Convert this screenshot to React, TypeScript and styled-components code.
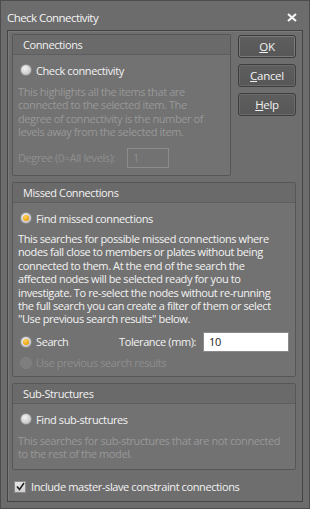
import React from "react";
import styled, { createGlobalStyle } from "styled-components";

const Global = createGlobalStyle`
  html, body { margin: 0; padding: 0; background: #6b6b6b; }
  body { font-family: "Open Sans", "Noto Sans", "DejaVu Sans", sans-serif; }
`;

const Window = styled.div`
  width: 310px;
  height: 509px;
  box-sizing: border-box;
  background: #6c6c6c;
  border: 1px solid #4c4c4c;
  display: flex;
  flex-direction: column;
  font-size: 11px;
  letter-spacing: -0.4px;
  color: #f2f2f2;
`;

const TitleBar = styled.div`
  height: 29px;
  display: flex;
  align-items: center;
  justify-content: space-between;
  padding: 0 12px 0 6px;
`;

const Title = styled.span`
  font-size: 11.5px;
  letter-spacing: -0.55px;
  color: #f4f4f4;
  padding-top: 4px;
`;

const Close = styled.svg`
  width: 10px;
  height: 9px;
  margin-top: 3px;
`;

const Body = styled.div`
  margin: 0 6px 6px;
  flex: 1;
  border: 1px solid #444;
  box-shadow: inset 1px 1px 0 #7a7a7a;
  background: #6e6e6e;
  padding: 3px 6px 0 4px;
  display: grid;
  grid-template-columns: 219px 58px;
  column-gap: 7px;
  row-gap: 6px;
  align-content: start;
`;

const Group = styled.div<{ $span?: boolean; $h: number }>`
  grid-column: ${(p) => (p.$span ? "1 / span 2" : "auto")};
  height: ${(p) => p.$h}px;
  box-sizing: border-box;
  border: 1px solid #565656;
  border-radius: 2px;
  background: #727272;
  display: flex;
  flex-direction: column;
`;

const GroupHeader = styled.div`
  height: 19px;
  flex: none;
  background: #6a6a6a;
  border-bottom: 1px solid #5e5e5e;
  display: flex;
  align-items: center;
  padding-left: 10px;
  color: #f2f2f2;
`;

const GroupContent = styled.div`
  padding: 6px 5px 0 4px;
  display: flex;
  flex-direction: column;
`;

const RadioRow = styled.label<{ $disabled?: boolean; $w?: number }>`
  display: flex;
  align-items: center;
  height: 18px;
  gap: 4px;
  padding-left: 3px;
  box-sizing: border-box;
  flex: none;
  width: ${(p) => (p.$w ? `${p.$w}px` : "auto")};
  white-space: nowrap;
  color: ${(p) => (p.$disabled ? "#8e8e8e" : "#f2f2f2")};
`;

const RadioCircle = styled.span<{ $checked?: boolean; $disabled?: boolean }>`
  width: 12px;
  height: 12px;
  flex: none;
  border-radius: 50%;
  box-sizing: border-box;
  border: 1px solid ${(p) => (p.$disabled ? "#828282" : "#8a8a8a")};
  background: ${(p) =>
    p.$disabled
      ? "#7e7e7e"
      : "radial-gradient(circle at 40% 35%, #f4f4f4, #c8c8c8 70%, #b0b0b0)"};
  display: flex;
  align-items: center;
  justify-content: center;
  &::after {
    content: "";
    display: ${(p) => (p.$checked ? "block" : "none")};
    width: 6px;
    height: 6px;
    border-radius: 50%;
    background: radial-gradient(circle at 40% 35%, #ffd266, #f0a000 70%, #c87800);
  }
`;

const Desc = styled.p<{ $disabled?: boolean }>`
  margin: 0;
  padding-left: 1px;
  line-height: 13.4px;
  white-space: nowrap;
  color: ${(p) => (p.$disabled ? "#989898" : "#f2f2f2")};
`;

const DegreeRow = styled.div`
  display: flex;
  align-items: center;
  gap: 12px;
  margin-top: 9px;
  color: #8f8f8f;
  padding-left: 1px;
`;

const TextBox = styled.div<{ $w: number; $disabled?: boolean }>`
  width: ${(p) => p.$w}px;
  height: 20px;
  flex: none;
  box-sizing: border-box;
  border: 1px solid ${(p) => (p.$disabled ? "#8c8c8c" : "#8a8a8a")};
  background: ${(p) => (p.$disabled ? "transparent" : "#ffffff")};
  color: ${(p) => (p.$disabled ? "#8f8f8f" : "#1a1a1a")};
  display: flex;
  align-items: center;
  padding-left: 5px;
`;

const SearchRow = styled.div`
  display: flex;
  align-items: center;
  margin-top: 6px;
`;

const Tolerance = styled.span`
  margin-right: 7px;
  white-space: nowrap;
`;

const Buttons = styled.div`
  display: flex;
  flex-direction: column;
  gap: 6px;
  padding-top: 1px;
`;

const Button = styled.button<{ $default?: boolean }>`
  height: 23px;
  font-family: inherit;
  font-size: 11.5px;
  letter-spacing: -0.3px;
  color: #f2f2f2;
  background: linear-gradient(#5e5e5e, #575757);
  border: 1px solid ${(p) => (p.$default ? "#3a3a3a" : "#3e3e3e")};
  border-radius: 3px;
  box-shadow: inset 0 0 0 1px ${(p) => (p.$default ? "#7a7a7a" : "#6a6a6a")};
  padding: 0;
  u { text-decoration: underline; }
`;

const CheckRow = styled.label`
  grid-column: 1 / span 2;
  display: flex;
  align-items: center;
  gap: 5px;
  margin-top: 3px;
  padding-left: 2px;
`;

const CheckBox = styled.span`
  width: 12px;
  height: 12px;
  box-sizing: border-box;
  border: 1px solid #8a8a8a;
  background: linear-gradient(#e6e6e6, #cfcfcf);
  display: flex;
  align-items: center;
  justify-content: center;
`;

export default function App() {
  return (
    <>
      <Global />
      <Window>
        <TitleBar>
          <Title>Check Connectivity</Title>
          <Close viewBox="0 0 10 9">
            <path d="M1 1 L9 8 M9 1 L1 8" stroke="#f4f4f4" strokeWidth="2.2" />
          </Close>
        </TitleBar>
        <Body>
          <Group $h={142}>
            <GroupHeader>Connections</GroupHeader>
            <GroupContent>
              <RadioRow>
                <RadioCircle />
                Check connectivity
              </RadioRow>
              <Desc $disabled style={{ marginTop: 6 }}>
                This highlights all the items that are<br />
                connected to the selected item. The<br />
                degree of connectivity is the number of<br />
                levels away from the selected item.
              </Desc>
              <DegreeRow>
                Degree (0=All levels):
                <TextBox $w={42} $disabled>1</TextBox>
              </DegreeRow>
            </GroupContent>
          </Group>
          <Buttons>
            <Button $default><u>O</u>K</Button>
            <Button><u>C</u>ancel</Button>
            <Button><u>H</u>elp</Button>
          </Buttons>
          <Group $span $h={195}>
            <GroupHeader>Missed Connections</GroupHeader>
            <GroupContent>
              <RadioRow>
                <RadioCircle $checked />
                Find missed connections
              </RadioRow>
              <Desc style={{ marginTop: 5 }}>
                This searches for possible missed connections where<br />
                nodes fall close to members or plates without being<br />
                connected to them. At the end of the search the<br />
                affected nodes will be selected ready for you to<br />
                investigate. To re-select the nodes without re-running<br />
                the full search you can create a filter of them or select<br />
                "Use previous search results" below.
              </Desc>
              <SearchRow>
                <RadioRow $w={102}>
                  <RadioCircle $checked />
                  Search
                </RadioRow>
                <Tolerance>Tolerance (mm):</Tolerance>
                <TextBox $w={86}>10</TextBox>
              </SearchRow>
              <RadioRow $disabled style={{ marginTop: 2 }}>
                <RadioCircle $disabled />
                Use previous search results
              </RadioRow>
            </GroupContent>
          </Group>
          <Group $span $h={87}>
            <GroupHeader>Sub-Structures</GroupHeader>
            <GroupContent>
              <RadioRow>
                <RadioCircle />
                Find sub-structures
              </RadioRow>
              <Desc $disabled style={{ marginTop: 6 }}>
                This searches for sub-structures that are not connected<br />
                to the rest of the model.
              </Desc>
            </GroupContent>
          </Group>
          <CheckRow>
            <CheckBox>
              <svg width="9" height="9" viewBox="0 0 9 9">
                <path d="M1 4.5 L3.5 7.5 L8 1" stroke="#222" strokeWidth="1.6" fill="none" />
              </svg>
            </CheckBox>
            Include master-slave constraint connections
          </CheckRow>
        </Body>
      </Window>
    </>
  );
}
